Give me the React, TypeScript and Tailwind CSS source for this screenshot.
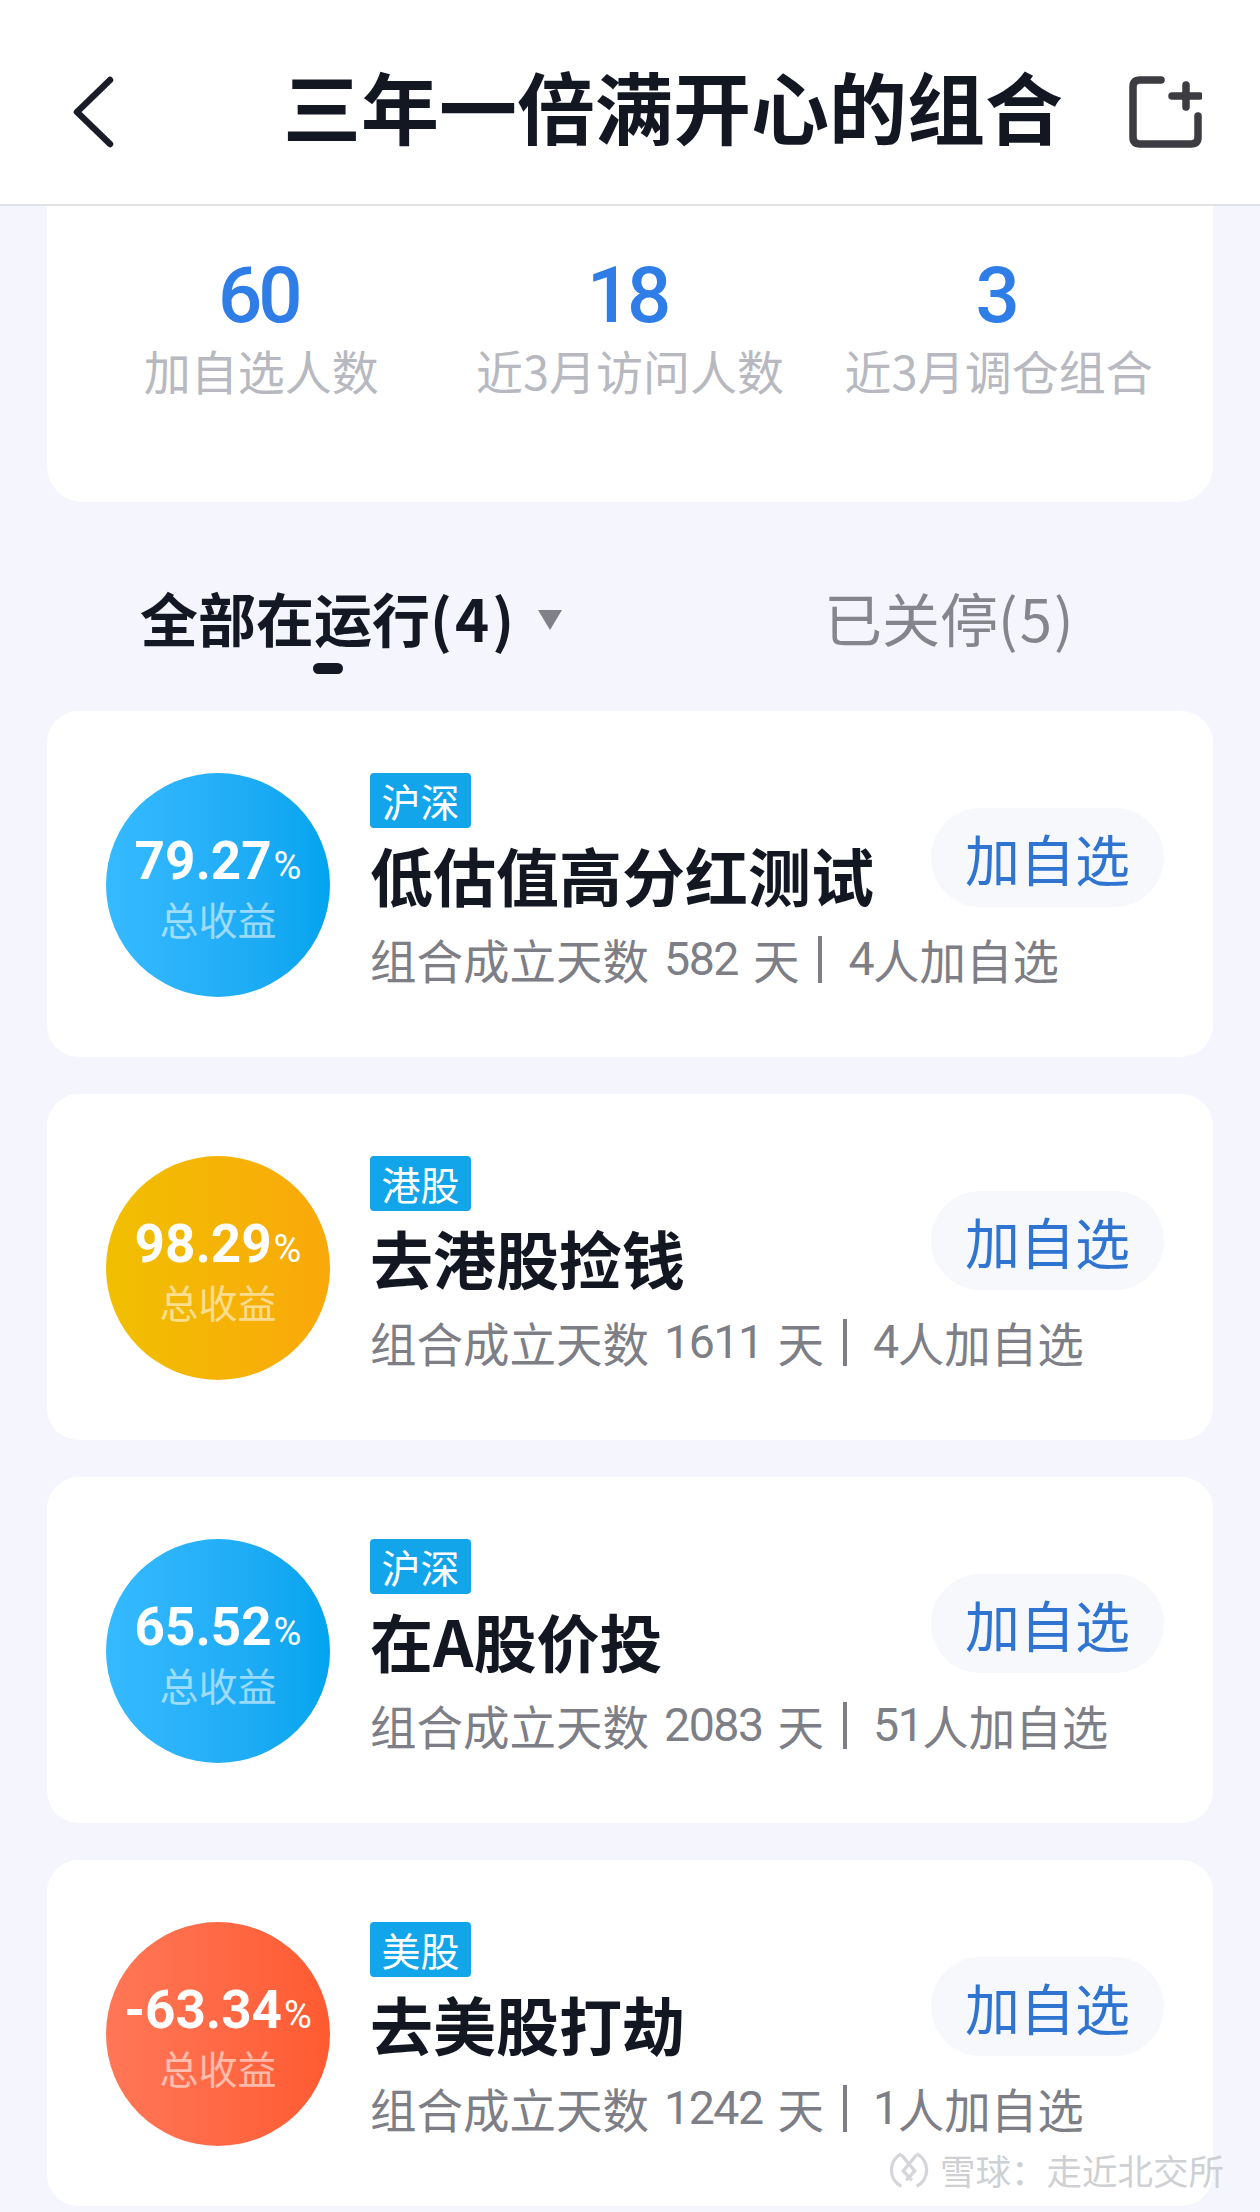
const cjk = "font-['Noto_Sans_CJK_SC',sans-serif]";
const num = "font-['Roboto','Noto_Sans_CJK_SC',sans-serif]";

const stats = [
  { value: "60", label: "加自选人数" },
  { value: "18", label: "近3月访问人数" },
  { value: "3", label: "近3月调仓组合" },
];

type Item = {
  rate: string;
  circle: string;
  tag: string;
  title: string;
  days: string;
  people: string;
};

const items: Item[] = [
  { rate: "79.27", circle: "from-[#36baff] to-[#02a4ef]", tag: "沪深", title: "低估值高分红测试", days: "582", people: "4" },
  { rate: "98.29", circle: "from-[#f0bf00] to-[#faa80a]", tag: "港股", title: "去港股捡钱", days: "1611", people: "4" },
  { rate: "65.52", circle: "from-[#36baff] to-[#02a4ef]", tag: "沪深", title: "在A股价投", days: "2083", people: "51" },
  { rate: "-63.34", circle: "from-[#ff7757] to-[#ff5a30]", tag: "美股", title: "去美股打劫", days: "1242", people: "1" },
];

function Card({ item }: { item: Item }) {
  return (
    <div className="flex h-[346px] items-start rounded-[32px] bg-white pl-[59px] pt-[62px]">
      <div className={`flex h-[224px] w-[224px] shrink-0 flex-col items-center rounded-full bg-linear-to-r pt-[56px] ${item.circle}`}>
        <div className={`whitespace-nowrap text-[53px] leading-[64px] font-bold text-white ${num}`}>
          {item.rate}
          <span className="ml-[2px] text-[38px] font-normal">%</span>
        </div>
        <div className={`-mt-[5px] text-[39px] leading-[50px] text-white/55 ${cjk}`}>总收益</div>
      </div>
      <div className="ml-[40px] grid w-[794px] grid-cols-[1fr_233px]">
        <div className={`col-start-1 row-start-1 flex h-[55px] w-[101px] items-center justify-center rounded-[4px] bg-[#12a5ea] text-[39px] text-white ${cjk}`}>
          {item.tag}
        </div>
        <div className={`col-start-1 row-start-2 mt-[1px] text-[63px] leading-[90px] font-bold text-[#131722] ${cjk}`}>{item.title}</div>
        <div className={`col-start-2 row-span-2 row-start-1 mt-[35px] flex h-[99px] items-center justify-center self-start rounded-full bg-[#f6f8fc] text-[55px] text-[#2f74d0] ${cjk}`}>
          加自选
        </div>
        <div className={`col-span-2 row-start-3 mt-[6px] flex items-center whitespace-nowrap text-[46.5px] leading-[68px] text-[#7d7e86] ${cjk}`}>
          <span>组合成立天数</span>
          <span className={`ml-[15px] tracking-[-1.5px] ${num}`}>{item.days}</span>
          <span className="ml-[15px]">天</span>
          <span className="ml-[19px] h-[47px] w-[4px] bg-[#7d7e86]" />
          <span className={`ml-[26px] tracking-[-1.5px] ${num}`}>{item.people}</span>
          <span>人加自选</span>
        </div>
      </div>
    </div>
  );
}

export default function App() {
  return (
    <div className={`relative h-[2212px] w-[1260px] overflow-hidden bg-[#f5f6fd] ${cjk}`}>
      <header className="flex h-[206px] items-center border-b-2 border-[#e2e3e7] bg-white pl-[72px] pr-[58px] pt-[20px]">
        <svg width="42" height="72" viewBox="0 0 42 72" fill="none">
          <path d="M38 4 L5 36 L38 68" stroke="#1a1d27" strokeWidth="6.5" strokeLinecap="round" strokeLinejoin="round" />
        </svg>
        <h1 className="-mt-[14px] ml-[169px] whitespace-nowrap text-[78px] leading-none font-bold text-[#131722]">三年一倍满开心的组合</h1>
        <svg className="ml-auto" width="73" height="72" viewBox="0 0 73 72" fill="none">
          <path d="M32 4 H11 Q4 4 4 11 V61 Q4 68 11 68 H62 Q69 68 69 61 V40" stroke="#3c3c42" strokeWidth="7.5" strokeLinecap="round" />
          <path d="M43 20 H71 M57 9 V31" stroke="#3c3c42" strokeWidth="7.5" strokeLinecap="round" />
        </svg>
      </header>

      <div className="mx-[47px]">
        <section className="grid h-[296px] grid-cols-3 rounded-b-[36px] bg-white px-[30px] pt-[59px]">
          {stats.map((s) => (
            <div key={s.label} className="flex flex-col items-center">
              <div className={`mr-[6px] text-[78px] leading-[62px] font-medium tracking-[-4px] text-[#2f7de6] ${num}`}>{s.value}</div>
              <div className="mt-[15px] whitespace-nowrap text-[47px] leading-[56px] text-[#b8b9c0]">{s.label}</div>
            </div>
          ))}
        </section>

        <nav className="relative flex h-[209px] items-start pl-[93px] pt-[80px]">
          <span className="text-[58px] leading-[70px] font-bold text-[#141824]">
            全部在运行<span className="tracking-[3px]">(4)</span>
          </span>
          <svg className="ml-[20px] mt-[28px]" width="26" height="20" viewBox="0 0 26 20">
            <path d="M1 0 H25 L13 20 Z" fill="#808087" />
          </svg>
          <span className="ml-[261px] text-[58px] leading-[70px] text-[#85858c]">
            已关停<span className="tracking-[2px]">(5)</span>
          </span>
          <span className="absolute left-[266px] top-[161px] h-[11px] w-[30px] rounded-full bg-[#141824]" />
        </nav>

        <div className="flex flex-col gap-[37px]">
          {items.map((item) => (
            <Card key={item.rate} item={item} />
          ))}
        </div>
      </div>

      <div className="absolute left-[889px] top-[2150px] flex items-center text-[35.5px] leading-none text-[#cfd0d4]">
        <svg width="40" height="40" viewBox="0 0 42 42" fill="none" stroke="#d5d6da" strokeWidth="3.5">
          <path d="M13 4 A19 19 0 0 0 13 38 M29 4 A19 19 0 0 1 29 38" />
          <path d="M13 5 L27 22 L18 32 M29 5 L15 22 L24 32" />
        </svg>
        <span className="ml-[11px] whitespace-nowrap">雪球：走近北交所</span>
      </div>
    </div>
  );
}
